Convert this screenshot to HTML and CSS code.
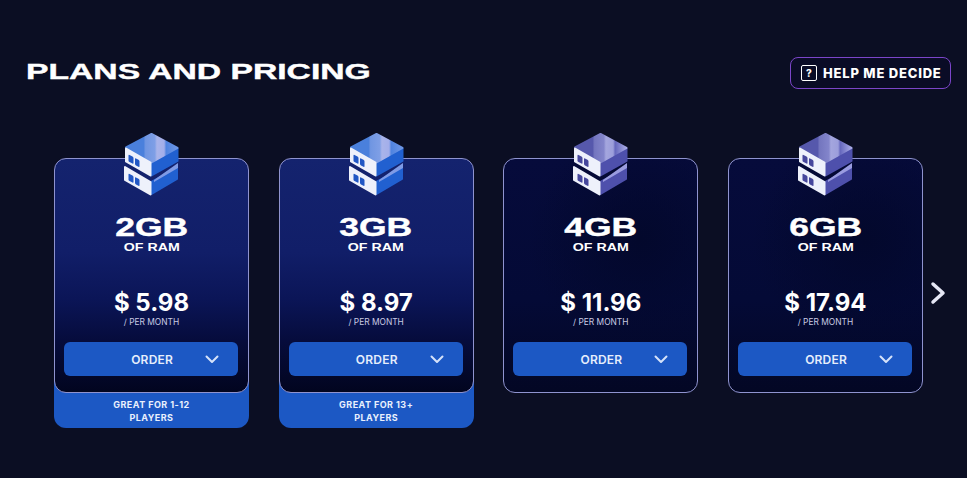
FILE: index.html
```html
<!DOCTYPE html>
<html lang="en">
<head>
    <meta charset="utf-8">
    <meta name="viewport" content="width=device-width, initial-scale=1.0">
    <title>Plans and Pricing</title>
    <link rel="stylesheet" href="styles.css">
</head>
<body>
    <svg class="defs" width="0" height="0">
        <linearGradient id="topBlue" x1="0" y1="0" x2="1" y2="0">
            <stop offset="0" stop-color="#4a80dc"/>
            <stop offset="0.34" stop-color="#4a80dc"/>
            <stop offset="0.38" stop-color="#7096e2"/>
            <stop offset="0.56" stop-color="#7f9fe6"/>
            <stop offset="0.6" stop-color="#a9b4ea"/>
            <stop offset="0.74" stop-color="#a3aeea"/>
            <stop offset="0.78" stop-color="#4f83e0"/>
            <stop offset="1" stop-color="#6f97e6"/>
        </linearGradient>
        <linearGradient id="topPurple" x1="0" y1="0" x2="1" y2="0">
            <stop offset="0" stop-color="#5658ac"/>
            <stop offset="0.34" stop-color="#5658ac"/>
            <stop offset="0.38" stop-color="#7476bf"/>
            <stop offset="0.56" stop-color="#8385cb"/>
            <stop offset="0.6" stop-color="#a4a6de"/>
            <stop offset="0.74" stop-color="#9c9edb"/>
            <stop offset="0.78" stop-color="#6567bd"/>
            <stop offset="1" stop-color="#a9abe6"/>
        </linearGradient>
        <symbol id="server-blue" viewBox="0 0 56 66">
            <path class="block side-blue" d="M27.500 50 L53 36 V47 L27.500 62 Z"/>
            <path class="mid-blue" d="M30 48 L54 31 V36 L30 50 Z"/>
            <path class="block front" d="M1 35 L26.500 50 V62.500 L1 48 Z"/>
            <rect class="port port-blue" x="4.500" y="0" width="5" height="7" rx="1" transform="translate(0 39) skewY(28)"/>
            <rect class="port port-blue" x="11" y="0" width="4.500" height="7" rx="1" transform="translate(0 39) skewY(28)"/>
            <path class="block side-blue" d="M27.500 31 L53.500 16.500 V29 L27.500 43.500 Z"/>
            <path class="block" fill="url(#topBlue)" stroke="url(#topBlue)" d="M27.500 2 L53.500 16 L27.500 30.500 L2 15.500 Z"/>
            <path class="block front" d="M2 16.500 L26.500 30.500 V43.500 L2 29.500 Z"/>
            <rect class="port port-blue" x="4.500" y="0" width="5" height="7" rx="1" transform="translate(0 20) skewY(28)"/>
            <rect class="port port-blue" x="11" y="0" width="4.500" height="7" rx="1" transform="translate(0 20) skewY(28)"/>
        </symbol>
        <symbol id="server-purple" viewBox="0 0 56 66">
            <path class="block side-purple" d="M27.500 50 L53 36 V47 L27.500 62 Z"/>
            <path class="mid-purple" d="M30 48 L54 31 V36 L30 50 Z"/>
            <path class="block front" d="M1 35 L26.500 50 V62.500 L1 48 Z"/>
            <rect class="port port-purple" x="4.500" y="0" width="5" height="7" rx="1" transform="translate(0 39) skewY(28)"/>
            <rect class="port port-purple" x="11" y="0" width="4.500" height="7" rx="1" transform="translate(0 39) skewY(28)"/>
            <path class="block side-purple" d="M27.500 31 L53.500 16.500 V29 L27.500 43.500 Z"/>
            <path class="block" fill="url(#topPurple)" stroke="url(#topPurple)" d="M27.500 2 L53.500 16 L27.500 30.500 L2 15.500 Z"/>
            <path class="block front" d="M2 16.500 L26.500 30.500 V43.500 L2 29.500 Z"/>
            <rect class="port port-purple" x="4.500" y="0" width="5" height="7" rx="1" transform="translate(0 20) skewY(28)"/>
            <rect class="port port-purple" x="11" y="0" width="4.500" height="7" rx="1" transform="translate(0 20) skewY(28)"/>
        </symbol>
        <symbol id="chevron" viewBox="0 0 14 9">
            <path d="M1.500 1.500 L7 7 L12.500 1.500" fill="none" stroke="currentColor" stroke-width="2" stroke-linecap="round" stroke-linejoin="round"/>
        </symbol>
    </svg>

    <div class="header">
        <h1><span>PLANS AND PRICING</span></h1>
        <button class="help-btn">
            <span class="help-icon">?</span>
            HELP ME DECIDE
        </button>
    </div>

    <div class="plans-row">
        <div class="plans">
            <div class="plan plan-blue">
                <div class="plan-card">
                    <svg class="server-icon"><use href="#server-blue"/></svg>
                    <div class="ram"><span>2GB</span></div>
                    <div class="ram-label"><span>OF RAM</span></div>
                    <div class="price">$ 5.98</div>
                    <div class="per-month">/ PER MONTH</div>
                    <button class="order-btn"><span>ORDER</span><svg class="chevron"><use href="#chevron"/></svg></button>
                </div>
                <div class="plan-tag">GREAT FOR 1-12<br>PLAYERS</div>
            </div>
            <div class="plan plan-blue">
                <div class="plan-card">
                    <svg class="server-icon"><use href="#server-blue"/></svg>
                    <div class="ram"><span>3GB</span></div>
                    <div class="ram-label"><span>OF RAM</span></div>
                    <div class="price">$ 8.97</div>
                    <div class="per-month">/ PER MONTH</div>
                    <button class="order-btn"><span>ORDER</span><svg class="chevron"><use href="#chevron"/></svg></button>
                </div>
                <div class="plan-tag">GREAT FOR 13+<br>PLAYERS</div>
            </div>
            <div class="plan plan-purple">
                <div class="plan-card">
                    <svg class="server-icon"><use href="#server-purple"/></svg>
                    <div class="ram"><span>4GB</span></div>
                    <div class="ram-label"><span>OF RAM</span></div>
                    <div class="price">$ 11.96</div>
                    <div class="per-month">/ PER MONTH</div>
                    <button class="order-btn"><span>ORDER</span><svg class="chevron"><use href="#chevron"/></svg></button>
                </div>
            </div>
            <div class="plan plan-purple">
                <div class="plan-card">
                    <svg class="server-icon"><use href="#server-purple"/></svg>
                    <div class="ram"><span>6GB</span></div>
                    <div class="ram-label"><span>OF RAM</span></div>
                    <div class="price">$ 17.94</div>
                    <div class="per-month">/ PER MONTH</div>
                    <button class="order-btn"><span>ORDER</span><svg class="chevron"><use href="#chevron"/></svg></button>
                </div>
            </div>
        </div>
        <svg class="next-arrow" viewBox="0 0 16 24">
            <path d="M3 3 L13 12 L3 21" fill="none" stroke="currentColor" stroke-width="3.500" stroke-linecap="round" stroke-linejoin="round"/>
        </svg>
    </div>
</body>
</html>
```

FILE: styles.css
```css
html, body {
    height: 100%;
}
body {
    margin: 0;
    overflow: hidden;
    background: #0b0e23;
    color: #fff;
    font-family: Inter, 'Liberation Sans', sans-serif;
}
button {
    font-family: inherit;
    cursor: pointer;
}
.defs {
    position: absolute;
}
.header {
    display: flex;
    align-items: center;
    justify-content: space-between;
    padding: 57px 16px 0 26px;
    height: 32px;
}
h1 {
    margin: -2px 0 0;
    font-family: 'Liberation Sans', sans-serif;
    font-size: 22px;
    font-weight: 700;
    line-height: 28px;
    white-space: nowrap;
}
h1 span {
    display: inline-block;
    transform: scaleX(1.53);
    transform-origin: left center;
    -webkit-text-stroke: 0.4px #fff;
}
.help-btn {
    display: flex;
    align-items: center;
    gap: 6px;
    box-sizing: border-box;
    width: 161px;
    height: 32px;
    padding: 0 0 0 10px;
    background: #0a0c26;
    border: 1px solid #7b45c9;
    border-radius: 8px;
    color: #fff;
    font-size: 13px;
    font-weight: 800;
    letter-spacing: 0.8px;
    white-space: nowrap;
}
.help-icon {
    display: flex;
    align-items: center;
    justify-content: center;
    box-sizing: border-box;
    width: 16px;
    height: 16px;
    border: 1.5px solid #fff;
    border-radius: 2px;
    font-size: 10px;
    letter-spacing: 0;
}
.plans-row {
    display: flex;
    align-items: flex-start;
    gap: 7px;
    padding: 69px 0 0 54px;
}
.plans {
    display: grid;
    grid-template-columns: repeat(4, 195px);
    column-gap: 29.67px;
}
.plan-card {
    position: relative;
    z-index: 1;
    box-sizing: border-box;
    height: 235px;
    padding: 55px 9px 0;
    text-align: center;
    border: 1px solid #8f93cf;
    border-radius: 12px;
}
.plan-blue .plan-card {
    background: linear-gradient(180deg, #14236e 0%, #111e68 40%, #0b1557 60%, #060c3c 78%, #02051f 100%);
}
.plan-purple .plan-card {
    background: radial-gradient(circle at 70% 35%, #03082c 0%, rgba(3, 8, 44, 0) 55%), linear-gradient(180deg, #060b3b 0%, #040a36 60%, #030724 100%);
}
.server-icon {
    position: absolute;
    top: -27px;
    left: 69px;
    width: 56px;
    height: 66px;
}
.block {
    stroke-width: 2;
    stroke-linejoin: round;
}
.front { fill: #eef1fb; stroke: #eef1fb; }
.side-blue { fill: #2160d0; stroke: #2160d0; }
.mid-blue { fill: #7f9be6; }
.port-blue { fill: #2157c4; }
.side-purple { fill: #4e50ac; stroke: #4e50ac; }
.mid-purple { fill: #9a9ce0; }
.port-purple { fill: #46479c; }
.ram {
    font-family: 'Liberation Sans', sans-serif;
    font-size: 25px;
    font-weight: 700;
    line-height: 26px;
}
.ram span,
.ram-label span {
    display: inline-block;
    transform: scaleX(1.42);
    -webkit-text-stroke: 0.4px #fff;
}
.ram-label {
    margin-top: 2px;
    font-family: 'Liberation Sans', sans-serif;
    font-size: 10px;
    font-weight: 700;
    line-height: 12px;
}
.ram-label span {
    -webkit-text-stroke: 0;
}
.price {
    margin-top: 34px;
    font-size: 24px;
    font-weight: 700;
    line-height: 30px;
}
.per-month {
    margin-top: -1px;
    font-size: 8.400px;
    line-height: 10px;
    color: #c9cbe4;
}
.order-btn {
    display: flex;
    align-items: center;
    justify-content: flex-end;
    gap: 18px;
    box-sizing: border-box;
    width: 174px;
    height: 34px;
    margin-top: 15px;
    padding: 0 19px 0 0;
    background: #1c58c4;
    border: 0;
    border-radius: 6px;
    color: #e6eefc;
    font-size: 12px;
    font-weight: 600;
    letter-spacing: 0.2px;
}
.order-btn span {
    margin-right: 14px;
}
.chevron {
    width: 14px;
    height: 9px;
    color: #d5e2fa;
}
.plan-tag {
    box-sizing: border-box;
    height: 48px;
    margin-top: -13px;
    padding-top: 18px;
    background: #1c58c4;
    border-radius: 0 0 12px 12px;
    text-align: center;
    color: #e9f0fd;
    font-size: 9px;
    font-weight: 700;
    letter-spacing: 0.45px;
    line-height: 13px;
}
.next-arrow {
    width: 16px;
    height: 24px;
    margin-top: 123px;
    color: #e6e7f5;
}
```
